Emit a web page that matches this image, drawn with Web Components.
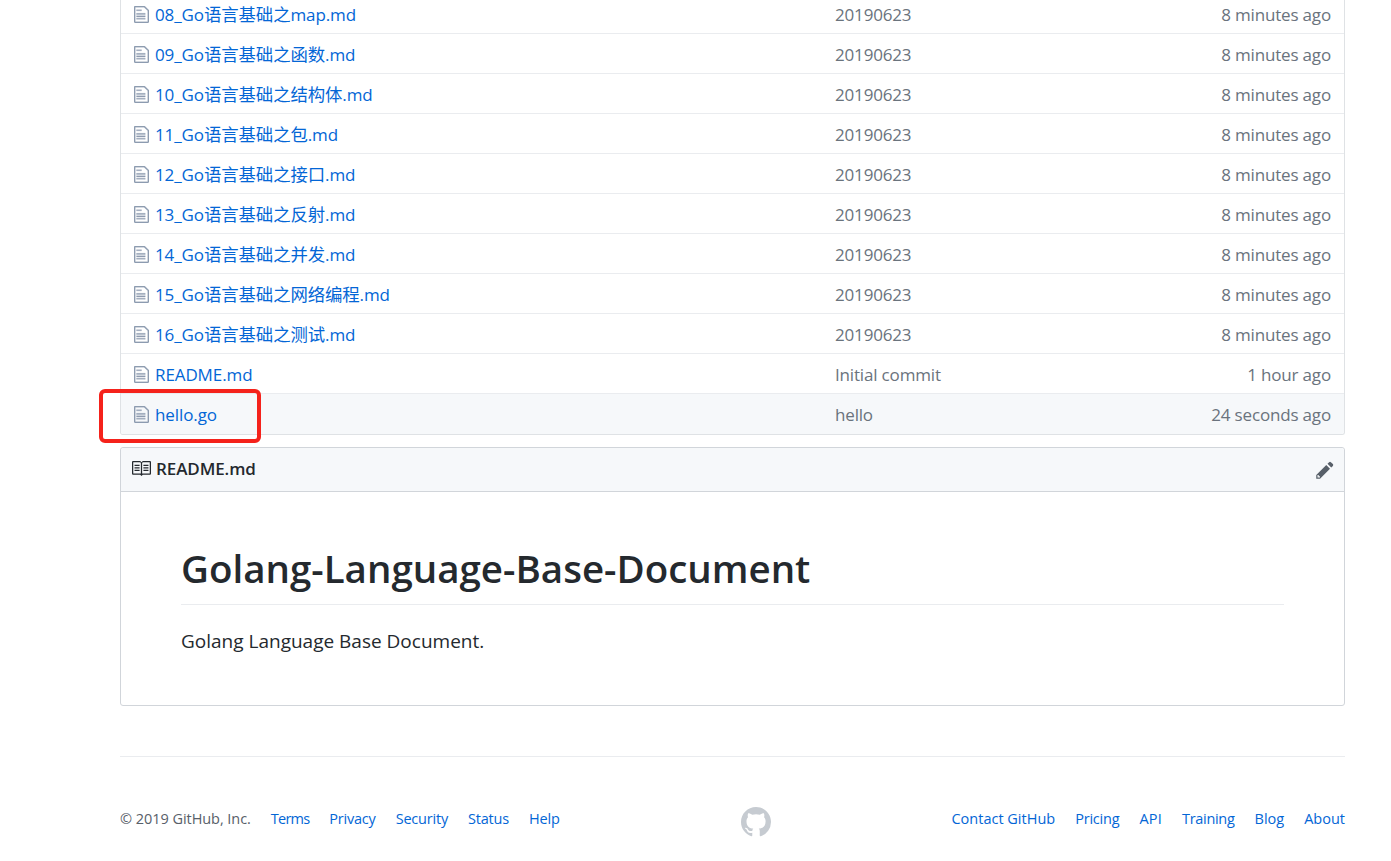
<!DOCTYPE html>
<html>
<head>
<meta charset="utf-8">
<title>Golang-Language-Base-Document</title>
<style>
  html, body { margin: 0; padding: 0; background: #fff; overflow: hidden; height: 861px; }
  body { font-family: "Open Sans", "Noto Sans CJK SC", sans-serif; color: #24292e; }
</style>
</head>
<body>
<repo-page>
  <file-table>
    <file-row name="08_Go语言基础之map.md" msg="20190623" age="8 minutes ago"></file-row>
    <file-row name="09_Go语言基础之函数.md" msg="20190623" age="8 minutes ago"></file-row>
    <file-row name="10_Go语言基础之结构体.md" msg="20190623" age="8 minutes ago"></file-row>
    <file-row name="11_Go语言基础之包.md" msg="20190623" age="8 minutes ago"></file-row>
    <file-row name="12_Go语言基础之接口.md" msg="20190623" age="8 minutes ago"></file-row>
    <file-row name="13_Go语言基础之反射.md" msg="20190623" age="8 minutes ago"></file-row>
    <file-row name="14_Go语言基础之并发.md" msg="20190623" age="8 minutes ago"></file-row>
    <file-row name="15_Go语言基础之网络编程.md" msg="20190623" age="8 minutes ago"></file-row>
    <file-row name="16_Go语言基础之测试.md" msg="20190623" age="8 minutes ago"></file-row>
    <file-row name="README.md" msg="Initial commit" age="1 hour ago"></file-row>
    <file-row name="hello.go" msg="hello" age="24 seconds ago" last></file-row>
  </file-table>
  <readme-box>
    <h1 slot="title">Golang-Language-Base-Document</h1>
    <span slot="text">Golang Language Base Document.</span>
  </readme-box>
  <site-footer></site-footer>
  <mark-box></mark-box>
</repo-page>

<script>
class RepoPage extends HTMLElement {
  constructor() {
    super();
    this.attachShadow({ mode: "open" }).innerHTML = `
      <style>
        :host { display: block; position: relative; width: 1225px; margin: -6px 0 0 120px; }
      </style>
      <slot></slot>`;
  }
}

class FileTable extends HTMLElement {
  constructor() {
    super();
    this.attachShadow({ mode: "open" }).innerHTML = `
      <style>
        :host { display: block; border: 1px solid #dfe2e5; border-top: 0; border-radius: 0 0 3px 3px; overflow: hidden; }
      </style>
      <slot></slot>`;
  }
}

class FileRow extends HTMLElement {
  connectedCallback() {
    const last = this.hasAttribute("last");
    const root = this.shadowRoot || this.attachShadow({ mode: "open" });
    // the CJK runs sit a little wider than the latin text next to them
    const name = this.getAttribute("name").replace(/[\u4e00-\u9fff]+/g, m => `<span class="cjk">${m}</span>`);
    root.innerHTML = `
      <style>
        :host { display: grid; grid-template-columns: 701px 1fr auto; align-items: center; height: ${last ? 40 : 38}px;
          padding: ${last ? 0 : 1}px 13px 0 13px; font-size: 17px; letter-spacing: -0.17px;
          border-bottom: ${last ? "0" : "1px solid #eaecef"}; background: ${last ? "#f6f8fa" : "#fff"}; }
        .name { display: flex; align-items: center; gap: 6px; color: #0366d6; white-space: nowrap; letter-spacing: -0.1px; }
        .label { display: block; line-height: 20px; padding-top: 2px; }
        .cjk { font-size: 17.4px; line-height: 0; }
        .msg, .age { color: #6a737d; white-space: nowrap; }
        .age { text-align: right; }
        svg { display: block; flex: none; }
      </style>
      <div class="name">
        <svg width="15" height="17" viewBox="0 1 12 14" fill="#8e9db1" stroke="#8e9db1" stroke-width=".2" preserveAspectRatio="none"><path fill-rule="evenodd" d="M6 5H2V4h4v1zM2 8h7V7H2v1zm0 2h7V9H2v1zm0 2h7v-1H2v1zm10-7.5V14c0 .55-.45 1-1 1H1c-.55 0-1-.45-1-1V2c0-.55.45-1 1-1h7.5L12 4.5zM11 5L8 2H1v12h10V5z"/></svg>
        <span class="label">${name}</span>
      </div>
      <div class="msg">${this.getAttribute("msg")}</div>
      <div class="age">${this.getAttribute("age")}</div>`;
  }
}

class ReadmeBox extends HTMLElement {
  constructor() {
    super();
    this.attachShadow({ mode: "open" }).innerHTML = `
      <style>
        :host { display: block; margin-top: 12px; border: 1px solid #d1d5da; border-radius: 3px; height: 257px; }
        .head { display: flex; align-items: center; justify-content: space-between; height: 44px; box-sizing: border-box;
          padding: 0 9px 0 11px; background: #f6f8fa; border-bottom: 1px solid #d1d5da; border-radius: 3px 3px 0 0; }
        .file { display: flex; align-items: center; gap: 5px; font-size: 17px; font-weight: 600; letter-spacing: -0.1px; color: #24292e; padding-bottom: 2px; }
        svg { display: block; }
        .body { padding: 0 60px 0 60px; }
        ::slotted(h1) { margin: 0; padding: 52px 0 11px; height: 49px; line-height: 49px; font-size: 38.5px; font-weight: 600;
          color: #24292e; border-bottom: 1px solid #eaecef; }
        .text { margin-top: 23px; font-size: 19px; line-height: 26px; color: #24292e; }
      </style>
      <div class="head">
        <div class="file">
          <svg width="19" height="15" viewBox="1 2 15 12" fill="#24292e" preserveAspectRatio="none"><path fill-rule="evenodd" d="M3 5h4v1H3V5zm0 3h4V7H3v1zm0 2h4V9H3v1zm11-5h-4v1h4V5zm0 2h-4v1h4V7zm0 2h-4v1h4V9zm2-6v9c0 .55-.45 1-1 1H9.5l-1 1-1-1H2c-.55 0-1-.45-1-1V3c0-.55.45-1 1-1h5.5l1 1 1-1H15c.55 0 1 .45 1 1zm-8 .5L7.5 3H2v9h6V3.5zm7-.5H9.5l-.5.5V12h6V3z"/></svg>
          <span>README.md</span>
        </div>
        <svg width="20" height="20" viewBox="0 0 14 16" fill="#586069"><path fill-rule="evenodd" d="M0 12v3h3l8-8-3-3-8 8zm3 2H1v-2h1v1h1v1zm10.3-9.3L12 6 9 3l1.3-1.3a.996.996 0 0 1 1.41 0l1.59 1.59c.39.39.39 1.02 0 1.41z"/></svg>
      </div>
      <div class="body">
        <slot name="title"></slot>
        <div class="text"><slot name="text"></slot></div>
      </div>`;
  }
}

class SiteFooter extends HTMLElement {
  constructor() {
    super();
    const left = ["Terms", "Privacy", "Security", "Status", "Help"];
    const right = ["Contact GitHub", "Pricing", "API", "Training", "Blog", "About"];
    const links = list => list.map(t => `<a href="#" class="${t.split(" ")[0].toLowerCase()}">${t}</a>`).join("");
    this.attachShadow({ mode: "open" }).innerHTML = `
      <style>
        :host { display: block; margin-top: 50px; border-top: 1px solid #eaecef; padding-top: 50px;
          font-size: 14.5px; letter-spacing: -0.2px; line-height: 24px; color: #586069; }
        .bar { display: flex; justify-content: space-between; align-items: flex-start; }
        .side { display: flex; gap: 20px; white-space: nowrap; }
        .copy { letter-spacing: -0.05px; }
        .contact, .about, .blog { letter-spacing: 0; }
        .terms { letter-spacing: -0.8px; }
        .api { letter-spacing: 0.2px; }
        .training { letter-spacing: -0.3px; }
        a { color: #0366d6; text-decoration: none; }
        svg { display: block; }
      </style>
      <div class="bar">
        <div class="side"><span class="copy">© 2019 GitHub, Inc.</span>${links(left)}</div>
        <svg width="30" height="30" viewBox="0 0 16 16" fill="#c6cbd1"><path fill-rule="evenodd" d="M8 0C3.58 0 0 3.58 0 8c0 3.54 2.29 6.53 5.47 7.59.4.07.55-.17.55-.38 0-.19-.01-.82-.01-1.49-2.01.37-2.53-.49-2.69-.94-.09-.23-.48-.94-.82-1.13-.28-.15-.68-.52-.01-.53.63-.01 1.08.58 1.23.82.72 1.21 1.87.87 2.33.66.07-.52.28-.87.51-1.07-1.78-.2-3.64-.89-3.64-3.95 0-.87.31-1.59.82-2.15-.08-.2-.36-1.02.08-2.12 0 0 .67-.21 2.2.82.64-.18 1.32-.27 2-.27.68 0 1.36.09 2 .27 1.53-1.04 2.2-.82 2.2-.82.44 1.1.16 1.92.08 2.12.51.56.82 1.27.82 2.15 0 3.07-1.87 3.75-3.65 3.95.29.25.54.73.54 1.48 0 1.07-.01 1.93-.01 2.2 0 .21.15.46.55.38A8.013 8.013 0 0 0 16 8c0-4.42-3.58-8-8-8z"/></svg>
        <div class="side">${links(right)}</div>
      </div>`;
  }
}

// red annotation drawn on top of the hello.go row
class MarkBox extends HTMLElement {
  constructor() {
    super();
    this.attachShadow({ mode: "open" }).innerHTML = `
      <style>
        :host { position: absolute; left: -21px; top: 395px; width: 162px; height: 54px; box-sizing: border-box;
          border: 4px solid #f5221b; border-radius: 6px; }
      </style>`;
  }
}

customElements.define("repo-page", RepoPage);
customElements.define("file-table", FileTable);
customElements.define("file-row", FileRow);
customElements.define("readme-box", ReadmeBox);
customElements.define("site-footer", SiteFooter);
customElements.define("mark-box", MarkBox);
</script>
</body>
</html>
